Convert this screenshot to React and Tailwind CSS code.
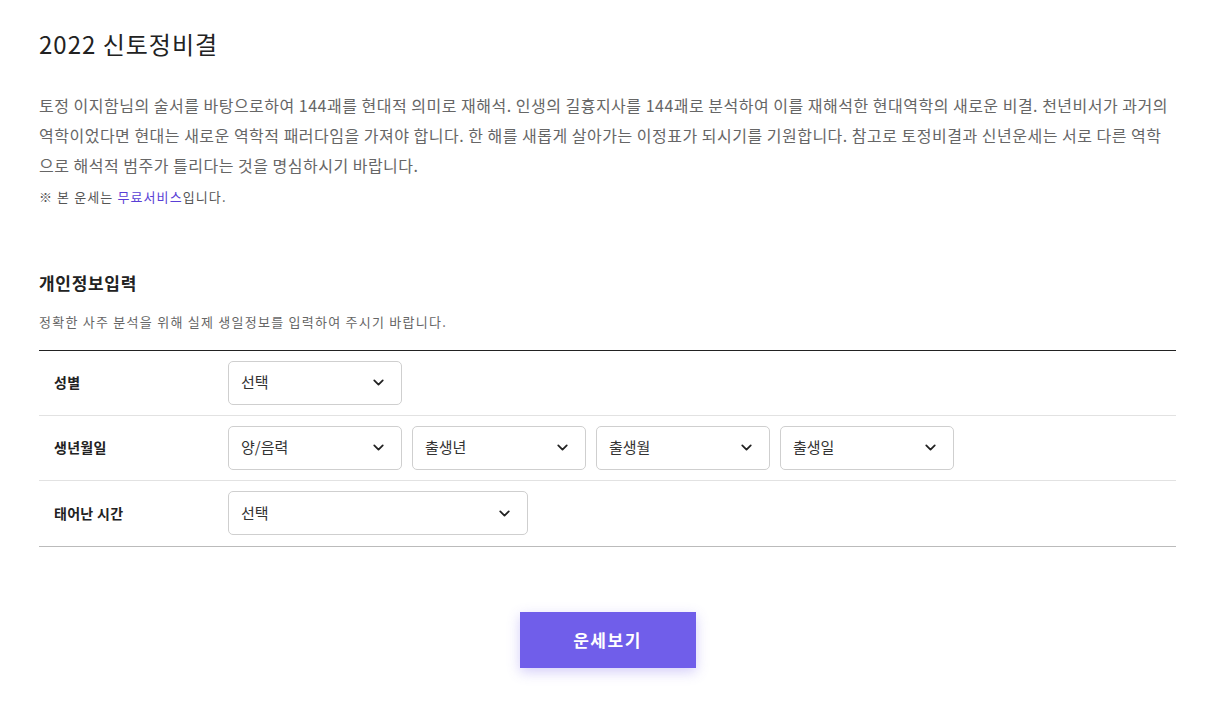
import React from 'react';
import { ChevronDown } from 'lucide-react';

const Select = ({ label, width }) => (
  <div className={`${width} h-[44px] border border-[#cfcfcf] rounded-[5px] bg-white flex items-center justify-between pl-3 pr-[14px] text-[15px] text-[#333]`}>
    <span>{label}</span>
    <ChevronDown className="w-[17px] h-[17px] text-[#222]" strokeWidth={2.5} />
  </div>
);

const Row = ({ title, children, last }) => (
  <div className={`flex items-center h-[65px] ${last ? '' : 'border-b border-[#e2e2e2]'}`}>
    <div className="w-[189px] pl-[15px] text-[14px] font-bold text-[#222] tracking-[0.3px]">{title}</div>
    <div className="flex gap-[10px]">{children}</div>
  </div>
);

export default function App() {
  return (
    <div className="min-h-screen bg-white pl-[39px] pr-[45px] pt-[26px] font-['Noto_Sans_CJK_KR','Noto_Sans',sans-serif]">
      <h1 className="text-[24px] text-[#222] leading-[36px] tracking-[1px]">2022 신토정비결</h1>

      <p className="mt-[28px] text-[16px] leading-[30px] text-[#666] tracking-[0.5px]">
        토정 이지함님의 술서를 바탕으로하여 144괘를 현대적 의미로 재해석. 인생의 길흉지사를 144괘로 분석하여 이를 재해석한 현대역학의 새로운 비결. 천년비서가 과거의 역학이었다면 현대는 새로운 역학적 패러다임을 가져야 합니다. 한 해를 새롭게 살아가는 이정표가 되시기를 기원합니다. 참고로 토정비결과 신년운세는 서로 다른 역학으로 해석적 범주가 틀리다는 것을 명심하시기 바랍니다.
      </p>
      <p className="mt-[7px] text-[13px] text-[#555] tracking-[1.1px]">
        ※ 본 운세는 <span className="text-[#5a3fd6]">무료서비스</span>입니다.
      </p>

      <h2 className="mt-[63px] text-[17px] font-bold text-[#222] tracking-[0.7px]">개인정보입력</h2>
      <p className="mt-[17px] text-[13px] text-[#666] tracking-[1.25px]">정확한 사주 분석을 위해 실제 생일정보를 입력하여 주시기 바랍니다.</p>

      <div className="mt-[18px] border-t border-[#222] border-b border-b-[#bbb]">
        <Row title="성별">
          <Select label="선택" width="w-[174px]" />
        </Row>
        <Row title="생년월일">
          <Select label="양/음력" width="w-[174px]" />
          <Select label="출생년" width="w-[174px]" />
          <Select label="출생월" width="w-[174px]" />
          <Select label="출생일" width="w-[174px]" />
        </Row>
        <Row title="태어난 시간" last>
          <Select label="선택" width="w-[300px]" />
        </Row>
      </div>

      <div className="flex justify-center mt-[65px]">
        <button className="w-[176px] h-[56px] bg-[#705eea] text-white text-[17px] font-bold tracking-[1.5px] shadow-[0_4px_12px_rgba(112,94,234,0.3)]">
          운세보기
        </button>
      </div>
    </div>
  );
}
